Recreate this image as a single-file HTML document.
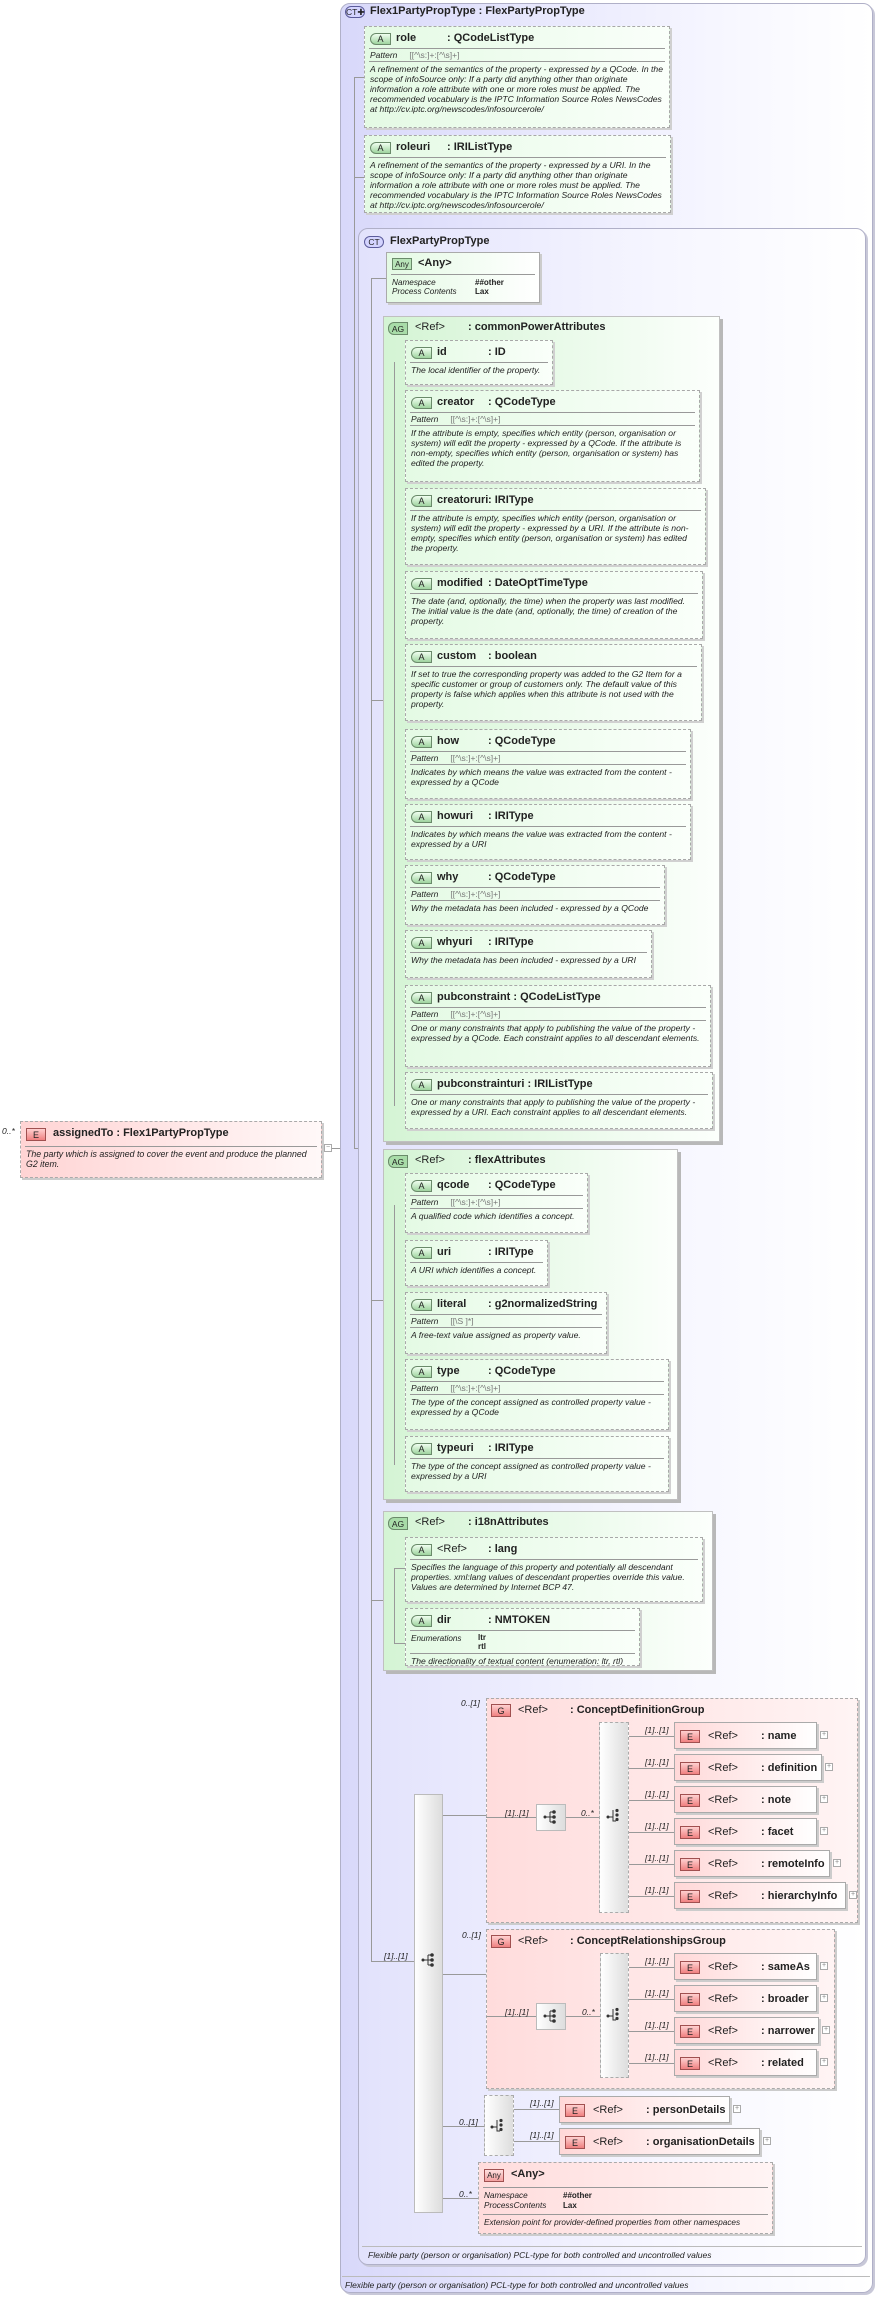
<!DOCTYPE html>
<html><head><meta charset="utf-8">
<style>
*{box-sizing:border-box;margin:0;padding:0}
body{width:879px;height:2298px;background:#fff;position:relative;overflow:hidden;font-family:"Liberation Sans",sans-serif;color:#222}
.abs{position:absolute}
.ct{position:absolute;border:1px solid #b0b0c8;border-radius:10px;box-shadow:2px 2px 0 #c8c8d8}
.a{position:absolute;border:1px dashed #a8a8a8;background:linear-gradient(90deg,#e4fae4,#fafffa);box-shadow:2px 2px 0 #d0d0d0;overflow:hidden}
.ag{position:absolute;border:1px solid #c0c0c0;background:linear-gradient(90deg,#d4f4d4,#fcfffc);box-shadow:3px 3px 0 #b8b8b8}
.h{height:21px;position:relative;font-size:11px;font-weight:bold;white-space:nowrap}
.h .n{position:absolute;left:31px;top:5px}
.h .t{position:absolute;left:82px;top:5px}
.bA{position:absolute;left:5px;top:6px;width:21px;height:12px;border:1px solid #6a8a6a;border-radius:6px 0 0 6px;background:linear-gradient(#f0fff0,#9fd49f);font-size:9px;font-weight:normal;text-align:center;line-height:10px}
.sep{border-top:1px solid #999;margin:0 4px}
.p{font-size:8.5px;font-style:italic;padding:1px 5px;height:12px;line-height:10px}
.p span{font-style:normal;color:#777;margin-left:12px}
.d{font-size:8.6px;font-style:italic;line-height:10px;padding:2px 5px}
.e{position:absolute;border:1px solid #aaa;background:linear-gradient(90deg,#ffd8d8,#fff);box-shadow:2px 2px 0 #ccc;height:27px;font-size:11px;font-weight:bold;white-space:nowrap}
.bE{position:absolute;left:5px;top:7px;width:20px;height:13px;border:1px solid #a05050;background:linear-gradient(#ffd0d0,#f08080);font-size:9px;font-weight:normal;text-align:center;line-height:12px}
.e .r{position:absolute;left:33px;top:7px;font-weight:normal}
.e .t{position:absolute;left:86px;top:7px}
.plus{position:absolute;width:8px;height:8px;border:1px solid #aaa;background:#fff;font-size:7px;line-height:6px;text-align:center;color:#888}
.m{position:absolute;font-size:8.5px;font-style:italic;white-space:nowrap}
.hl{position:absolute;height:1px;background:#999}
.vl{position:absolute;width:1px;background:#999}
.g{position:absolute;border:1px dashed #aaa;background:linear-gradient(90deg,#ffdcdc,#fff4f4);box-shadow:2px 2px 0 #ccc}
.bG{position:absolute;left:5px;top:6px;width:20px;height:13px;border:1px solid #a05050;background:linear-gradient(#ffd0d0,#f08080);font-size:9px;text-align:center;line-height:12px}
.bar{position:absolute;border:1px solid #bbb;background:linear-gradient(90deg,#fff,#ddd)}
.bard{position:absolute;border:1px dashed #aaa;background:linear-gradient(90deg,#fff,#ddd)}
.ref{position:absolute;font-size:11px;color:#222}
.tit{position:absolute;font-size:11px;font-weight:bold;white-space:nowrap}
</style></head><body>

<div class="ct" style="left:340px;top:3px;width:533px;height:2290px;background:linear-gradient(90deg,#d8d8fa,#f6f6ff 70%,#fff)"></div>
<div class="abs" style="left:345px;top:6px;width:20px;height:12px;border:1px solid #5a5a9a;border-radius:6px;background:#d4d4ff;font-size:8.5px;line-height:11px;text-align:center">CT✚</div>
<div class="tit" style="left:370px;top:5px">Flex1PartyPropType : FlexPartyPropType</div>
<div class="hl" style="left:342px;top:2276px;width:528px;background:#bbb"></div>
<div class="m" style="left:345px;top:2280px">Flexible party (person or organisation) PCL-type for both controlled and uncontrolled values</div>

<div class="vl" style="left:354px;top:77px;height:1071px"></div>
<div class="hl" style="left:354px;top:77px;width:10px"></div>
<div class="hl" style="left:354px;top:177px;width:10px"></div>
<div class="hl" style="left:354px;top:1148px;width:4px"></div>

<div class="a" style="left:364px;top:26px;width:306px;height:102px">
<div class="h"><div class="bA">A</div><span class="n">role</span><span class="t">: QCodeListType</span></div>
<div class="sep"></div><div class="p">Pattern<span>[[^\s:]+:[^\s]+]</span></div><div class="sep"></div>
<div class="d">A refinement of the semantics of the property - expressed by a QCode. In the scope of infoSource only: If a party did anything other than originate information a role attribute with one or more roles must be applied. The recommended vocabulary is the IPTC Information Source Roles NewsCodes at http://cv.iptc.org/newscodes/infosourcerole/</div>
</div>
<div class="a" style="left:364px;top:135px;width:307px;height:78px">
<div class="h"><div class="bA">A</div><span class="n">roleuri</span><span class="t">: IRIListType</span></div>
<div class="sep"></div>
<div class="d">A refinement of the semantics of the property - expressed by a URI. In the scope of infoSource only: If a party did anything other than originate information a role attribute with one or more roles must be applied. The recommended vocabulary is the IPTC Information Source Roles NewsCodes at http://cv.iptc.org/newscodes/infosourcerole/</div>
</div>

<div class="ct" style="left:358px;top:228px;width:508px;height:2037px;background:linear-gradient(90deg,#e2e2fc,#f6f6ff 60%,#fff)"></div>
<div class="abs" style="left:364px;top:236px;width:20px;height:12px;border:1px solid #5a5a9a;border-radius:6px;background:#d4d4ff;font-size:8.5px;line-height:11px;text-align:center">CT</div>
<div class="tit" style="left:390px;top:235px">FlexPartyPropType</div>
<div class="hl" style="left:362px;top:2246px;width:500px;background:#bbb"></div>
<div class="m" style="left:368px;top:2250px">Flexible party (person or organisation) PCL-type for both controlled and uncontrolled values</div>

<div class="vl" style="left:371px;top:278px;height:1683px"></div>
<div class="hl" style="left:371px;top:278px;width:15px"></div>
<div class="hl" style="left:371px;top:700px;width:12px"></div>
<div class="hl" style="left:371px;top:1300px;width:12px"></div>
<div class="hl" style="left:371px;top:1600px;width:12px"></div>
<div class="hl" style="left:371px;top:1961px;width:43px"></div>
<div class="m" style="left:384px;top:1951px">[1]..[1]</div>

<div class="abs" style="left:386px;top:252px;width:154px;height:51px;border:1px solid #aaa;background:linear-gradient(90deg,#e4fae4,#fff);box-shadow:2px 2px 0 #ccc">
<div class="abs" style="left:5px;top:5px;width:20px;height:12px;border:1px solid #6a8a6a;background:#b8e4b8;font-size:8px;text-align:center;line-height:11px">Any</div>
<div class="tit" style="left:31px;top:4px">&lt;Any&gt;</div>
<div class="abs" style="left:4px;top:21px;width:144px;border-top:1px solid #999"></div>
<div class="abs" style="left:5px;top:25px;font-size:8.2px;font-style:italic;line-height:9px">Namespace<br>Process Contents</div>
<div class="abs" style="left:88px;top:25px;font-size:8px;font-weight:bold;line-height:9px">##other<br>Lax</div>
</div>

<div class="ag" style="left:383px;top:316px;width:337px;height:826px"></div>
<div class="abs" style="left:388px;top:322px;width:20px;height:13px;border:1px solid #6a8a6a;border-radius:6px 0 0 6px;background:#a8dca8;font-size:8.5px;text-align:center;line-height:12px">AG</div>
<div class="ref" style="left:415px;top:321px">&lt;Ref&gt;</div>
<div class="tit" style="left:468px;top:321px">: commonPowerAttributes</div>
<div class="vl" style="left:394px;top:362px;height:744px"></div>

<div class="a" style="left:405px;top:340px;width:148px;height:45px"><div class="h"><div class="bA">A</div><span class="n">id</span><span class="t">: ID</span></div><div class="sep"></div><div class="d">The local identifier of the property.</div></div>

<div class="a" style="left:405px;top:390px;width:295px;height:92px"><div class="h"><div class="bA">A</div><span class="n">creator</span><span class="t">: QCodeType</span></div><div class="sep"></div><div class="p">Pattern<span>[[^\s:]+:[^\s]+]</span></div><div class="sep"></div><div class="d">If the attribute is empty, specifies which entity (person, organisation or system) will edit the property - expressed by a QCode. If the attribute is non-empty, specifies which entity (person, organisation or system) has edited the property.</div></div>

<div class="a" style="left:405px;top:488px;width:301px;height:77px"><div class="h"><div class="bA">A</div><span class="n">creatoruri</span><span class="t">: IRIType</span></div><div class="sep"></div><div class="d">If the attribute is empty, specifies which entity (person, organisation or system) will edit the property - expressed by a URI. If the attribute is non-empty, specifies which entity (person, organisation or system) has edited the property.</div></div>

<div class="a" style="left:405px;top:571px;width:298px;height:68px"><div class="h"><div class="bA">A</div><span class="n">modified</span><span class="t">: DateOptTimeType</span></div><div class="sep"></div><div class="d">The date (and, optionally, the time) when the property was last modified. The initial value is the date (and, optionally, the time) of creation of the property.</div></div>

<div class="a" style="left:405px;top:644px;width:297px;height:77px"><div class="h"><div class="bA">A</div><span class="n">custom</span><span class="t">: boolean</span></div><div class="sep"></div><div class="d">If set to true the corresponding property was added to the G2 Item for a specific customer or group of customers only. The default value of this property is false which applies when this attribute is not used with the property.</div></div>

<div class="a" style="left:405px;top:729px;width:286px;height:70px"><div class="h"><div class="bA">A</div><span class="n">how</span><span class="t">: QCodeType</span></div><div class="sep"></div><div class="p">Pattern<span>[[^\s:]+:[^\s]+]</span></div><div class="sep"></div><div class="d">Indicates by which means the value was extracted from the content - expressed by a QCode</div></div>

<div class="a" style="left:405px;top:804px;width:286px;height:56px"><div class="h"><div class="bA">A</div><span class="n">howuri</span><span class="t">: IRIType</span></div><div class="sep"></div><div class="d">Indicates by which means the value was extracted from the content - expressed by a URI</div></div>

<div class="a" style="left:405px;top:865px;width:260px;height:60px"><div class="h"><div class="bA">A</div><span class="n">why</span><span class="t">: QCodeType</span></div><div class="sep"></div><div class="p">Pattern<span>[[^\s:]+:[^\s]+]</span></div><div class="sep"></div><div class="d">Why the metadata has been included - expressed by a QCode</div></div>

<div class="a" style="left:405px;top:930px;width:247px;height:48px"><div class="h"><div class="bA">A</div><span class="n">whyuri</span><span class="t">: IRIType</span></div><div class="sep"></div><div class="d">Why the metadata has been included - expressed by a URI</div></div>

<div class="a" style="left:405px;top:985px;width:306px;height:82px"><div class="h"><div class="bA">A</div><span class="n">pubconstraint : QCodeListType</span></div><div class="sep"></div><div class="p">Pattern<span>[[^\s:]+:[^\s]+]</span></div><div class="sep"></div><div class="d">One or many constraints that apply to publishing the value of the property - expressed by a QCode. Each constraint applies to all descendant elements.</div></div>

<div class="a" style="left:405px;top:1072px;width:308px;height:57px"><div class="h"><div class="bA">A</div><span class="n">pubconstrainturi : IRIListType</span></div><div class="sep"></div><div class="d">One or many constraints that apply to publishing the value of the property - expressed by a URI. Each constraint applies to all descendant elements.</div></div>

<div class="ag" style="left:383px;top:1149px;width:295px;height:351px"></div>
<div class="abs" style="left:388px;top:1155px;width:20px;height:13px;border:1px solid #6a8a6a;border-radius:6px 0 0 6px;background:#a8dca8;font-size:8.5px;text-align:center;line-height:12px">AG</div>
<div class="ref" style="left:415px;top:1154px">&lt;Ref&gt;</div>
<div class="tit" style="left:468px;top:1154px">: flexAttributes</div>
<div class="vl" style="left:394px;top:1205px;height:260px"></div>

<div class="a" style="left:405px;top:1173px;width:183px;height:60px"><div class="h"><div class="bA">A</div><span class="n">qcode</span><span class="t">: QCodeType</span></div><div class="sep"></div><div class="p">Pattern<span>[[^\s:]+:[^\s]+]</span></div><div class="sep"></div><div class="d">A qualified code which identifies a concept.</div></div>
<div class="a" style="left:405px;top:1240px;width:143px;height:46px"><div class="h"><div class="bA">A</div><span class="n">uri</span><span class="t">: IRIType</span></div><div class="sep"></div><div class="d">A URI which identifies a concept.</div></div>
<div class="a" style="left:405px;top:1292px;width:202px;height:62px"><div class="h"><div class="bA">A</div><span class="n">literal</span><span class="t">: g2normalizedString</span></div><div class="sep"></div><div class="p">Pattern<span>[[\S ]*]</span></div><div class="sep"></div><div class="d">A free-text value assigned as property value.</div></div>
<div class="a" style="left:405px;top:1359px;width:264px;height:71px"><div class="h"><div class="bA">A</div><span class="n">type</span><span class="t">: QCodeType</span></div><div class="sep"></div><div class="p">Pattern<span>[[^\s:]+:[^\s]+]</span></div><div class="sep"></div><div class="d">The type of the concept assigned as controlled property value - expressed by a QCode</div></div>
<div class="a" style="left:405px;top:1436px;width:264px;height:56px"><div class="h"><div class="bA">A</div><span class="n">typeuri</span><span class="t">: IRIType</span></div><div class="sep"></div><div class="d">The type of the concept assigned as controlled property value - expressed by a URI</div></div>

<div class="ag" style="left:383px;top:1511px;width:330px;height:160px"></div>
<div class="abs" style="left:388px;top:1517px;width:20px;height:13px;border:1px solid #6a8a6a;border-radius:6px 0 0 6px;background:#a8dca8;font-size:8.5px;text-align:center;line-height:12px">AG</div>
<div class="ref" style="left:415px;top:1516px">&lt;Ref&gt;</div>
<div class="tit" style="left:468px;top:1516px">: i18nAttributes</div>
<div class="vl" style="left:394px;top:1568px;height:75px"></div>
<div class="hl" style="left:394px;top:1568px;width:11px"></div>
<div class="hl" style="left:394px;top:1643px;width:11px"></div>

<div class="a" style="left:405px;top:1537px;width:298px;height:65px"><div class="h"><div class="bA">A</div><span class="n" style="font-weight:normal">&lt;Ref&gt;</span><span class="t">: lang</span></div><div class="sep"></div><div class="d">Specifies the language of this property and potentially all descendant properties. xml:lang values of descendant properties override this value. Values are determined by Internet BCP 47.</div></div>
<div class="a" style="left:405px;top:1608px;width:235px;height:58px"><div class="h"><div class="bA">A</div><span class="n">dir</span><span class="t">: NMTOKEN</span></div><div class="sep"></div>
<div style="position:relative;height:22px"><span class="abs" style="left:5px;top:3px;font-size:8.2px;font-style:italic">Enumerations</span><span class="abs" style="left:72px;top:2px;font-size:8px;font-weight:bold;line-height:9px">ltr<br>rtl</span></div>
<div class="sep"></div><div class="d" style="white-space:nowrap">The directionality of textual content (enumeration: ltr, rtl)</div></div>

<div class="bar" style="left:414px;top:1794px;width:29px;height:419px"></div>
<svg class="abs" style="left:421px;top:1952px" width="16" height="16"><circle cx="2" cy="8" r="1.5" fill="#333"/><path d="M2 8H7M7 3V13M7 3H10M7 8H10M7 13H10" stroke="#333" fill="none"/><circle cx="11" cy="3" r="1.8" fill="#333"/><circle cx="11" cy="8" r="1.8" fill="#333"/><circle cx="11" cy="13" r="1.8" fill="#333"/></svg>
<div class="hl" style="left:443px;top:1815px;width:43px"></div>
<div class="hl" style="left:443px;top:1974px;width:43px"></div>
<div class="hl" style="left:443px;top:2126px;width:41px"></div>
<div class="hl" style="left:443px;top:2198px;width:35px"></div>

<div class="m" style="left:461px;top:1698px">0..[1]</div>
<div class="g" style="left:486px;top:1698px;width:372px;height:225px"></div>
<div class="bG" style="left:491px;top:1704px">G</div>
<div class="ref" style="left:518px;top:1704px">&lt;Ref&gt;</div>
<div class="tit" style="left:570px;top:1704px">: ConceptDefinitionGroup</div>
<div class="hl" style="left:486px;top:1817px;width:50px"></div>
<div class="m" style="left:505px;top:1808px">[1]..[1]</div>
<div class="bar" style="left:536px;top:1804px;width:30px;height:27px"></div>
<svg class="abs" style="left:543px;top:1809px" width="16" height="16"><circle cx="2" cy="8" r="1.5" fill="#333"/><path d="M2 8H7M7 3V13M7 3H10M7 8H10M7 13H10" stroke="#333" fill="none"/><circle cx="11" cy="3" r="1.8" fill="#333"/><circle cx="11" cy="8" r="1.8" fill="#333"/><circle cx="11" cy="13" r="1.8" fill="#333"/></svg>
<div class="hl" style="left:566px;top:1817px;width:33px"></div>
<div class="m" style="left:581px;top:1808px">0..*</div>
<div class="bard" style="left:599px;top:1722px;width:30px;height:191px"></div>
<svg class="abs" style="left:606px;top:1808px" width="16" height="18"><circle cx="2" cy="9" r="1.5" fill="#333"/><path d="M2 9H7M7 2V13H10" stroke="#333" fill="none"/><circle cx="11" cy="2.5" r="1.6" fill="#333"/><circle cx="11" cy="7" r="1.6" fill="#333"/><circle cx="11" cy="11.5" r="1.6" fill="#333"/></svg>

<div class="hl" style="left:629px;top:1736px;width:45px"></div><div class="m" style="left:645px;top:1725px">[1]..[1]</div>
<div class="e" style="left:674px;top:1722px;width:143px"><div class="bE">E</div><span class="r">&lt;Ref&gt;</span><span class="t">: name</span></div><div class="plus" style="left:820px;top:1731px">+</div>
<div class="hl" style="left:629px;top:1768px;width:45px"></div><div class="m" style="left:645px;top:1757px">[1]..[1]</div>
<div class="e" style="left:674px;top:1754px;width:148px"><div class="bE">E</div><span class="r">&lt;Ref&gt;</span><span class="t">: definition</span></div><div class="plus" style="left:825px;top:1763px">+</div>
<div class="hl" style="left:629px;top:1800px;width:45px"></div><div class="m" style="left:645px;top:1789px">[1]..[1]</div>
<div class="e" style="left:674px;top:1786px;width:143px"><div class="bE">E</div><span class="r">&lt;Ref&gt;</span><span class="t">: note</span></div><div class="plus" style="left:820px;top:1795px">+</div>
<div class="hl" style="left:629px;top:1832px;width:45px"></div><div class="m" style="left:645px;top:1821px">[1]..[1]</div>
<div class="e" style="left:674px;top:1818px;width:143px"><div class="bE">E</div><span class="r">&lt;Ref&gt;</span><span class="t">: facet</span></div><div class="plus" style="left:820px;top:1827px">+</div>
<div class="hl" style="left:629px;top:1864px;width:45px"></div><div class="m" style="left:645px;top:1853px">[1]..[1]</div>
<div class="e" style="left:674px;top:1850px;width:156px"><div class="bE">E</div><span class="r">&lt;Ref&gt;</span><span class="t">: remoteInfo</span></div><div class="plus" style="left:833px;top:1859px">+</div>
<div class="hl" style="left:629px;top:1896px;width:45px"></div><div class="m" style="left:645px;top:1885px">[1]..[1]</div>
<div class="e" style="left:674px;top:1882px;width:172px"><div class="bE">E</div><span class="r">&lt;Ref&gt;</span><span class="t">: hierarchyInfo</span></div><div class="plus" style="left:849px;top:1891px">+</div>

<div class="m" style="left:462px;top:1930px">0..[1]</div>
<div class="g" style="left:486px;top:1929px;width:349px;height:160px"></div>
<div class="bG" style="left:491px;top:1935px">G</div>
<div class="ref" style="left:518px;top:1935px">&lt;Ref&gt;</div>
<div class="tit" style="left:570px;top:1935px">: ConceptRelationshipsGroup</div>
<div class="hl" style="left:486px;top:2016px;width:50px"></div>
<div class="m" style="left:505px;top:2007px">[1]..[1]</div>
<div class="bar" style="left:536px;top:2003px;width:30px;height:27px"></div>
<svg class="abs" style="left:543px;top:2008px" width="16" height="16"><circle cx="2" cy="8" r="1.5" fill="#333"/><path d="M2 8H7M7 3V13M7 3H10M7 8H10M7 13H10" stroke="#333" fill="none"/><circle cx="11" cy="3" r="1.8" fill="#333"/><circle cx="11" cy="8" r="1.8" fill="#333"/><circle cx="11" cy="13" r="1.8" fill="#333"/></svg>
<div class="hl" style="left:566px;top:2016px;width:34px"></div>
<div class="m" style="left:582px;top:2007px">0..*</div>
<div class="bard" style="left:600px;top:1953px;width:29px;height:125px"></div>
<svg class="abs" style="left:606px;top:2007px" width="16" height="18"><circle cx="2" cy="9" r="1.5" fill="#333"/><path d="M2 9H7M7 2V13H10" stroke="#333" fill="none"/><circle cx="11" cy="2.5" r="1.6" fill="#333"/><circle cx="11" cy="7" r="1.6" fill="#333"/><circle cx="11" cy="11.5" r="1.6" fill="#333"/></svg>

<div class="hl" style="left:629px;top:1967px;width:45px"></div><div class="m" style="left:645px;top:1956px">[1]..[1]</div>
<div class="e" style="left:674px;top:1953px;width:143px"><div class="bE">E</div><span class="r">&lt;Ref&gt;</span><span class="t">: sameAs</span></div><div class="plus" style="left:820px;top:1962px">+</div>
<div class="hl" style="left:629px;top:1999px;width:45px"></div><div class="m" style="left:645px;top:1988px">[1]..[1]</div>
<div class="e" style="left:674px;top:1985px;width:143px"><div class="bE">E</div><span class="r">&lt;Ref&gt;</span><span class="t">: broader</span></div><div class="plus" style="left:820px;top:1994px">+</div>
<div class="hl" style="left:629px;top:2031px;width:45px"></div><div class="m" style="left:645px;top:2020px">[1]..[1]</div>
<div class="e" style="left:674px;top:2017px;width:145px"><div class="bE">E</div><span class="r">&lt;Ref&gt;</span><span class="t">: narrower</span></div><div class="plus" style="left:822px;top:2026px">+</div>
<div class="hl" style="left:629px;top:2063px;width:45px"></div><div class="m" style="left:645px;top:2052px">[1]..[1]</div>
<div class="e" style="left:674px;top:2049px;width:143px"><div class="bE">E</div><span class="r">&lt;Ref&gt;</span><span class="t">: related</span></div><div class="plus" style="left:820px;top:2058px">+</div>

<div class="m" style="left:459px;top:2117px">0..[1]</div>
<div class="bard" style="left:484px;top:2095px;width:30px;height:61px"></div>
<svg class="abs" style="left:490px;top:2118px" width="16" height="18"><circle cx="2" cy="9" r="1.5" fill="#333"/><path d="M2 9H7M7 2V13H10" stroke="#333" fill="none"/><circle cx="11" cy="2.5" r="1.6" fill="#333"/><circle cx="11" cy="7" r="1.6" fill="#333"/><circle cx="11" cy="11.5" r="1.6" fill="#333"/></svg>
<div class="hl" style="left:514px;top:2109px;width:45px"></div><div class="m" style="left:530px;top:2098px">[1]..[1]</div>
<div class="e" style="left:559px;top:2096px;width:171px"><div class="bE">E</div><span class="r">&lt;Ref&gt;</span><span class="t">: personDetails</span></div><div class="plus" style="left:733px;top:2105px">+</div>
<div class="hl" style="left:514px;top:2141px;width:45px"></div><div class="m" style="left:530px;top:2130px">[1]..[1]</div>
<div class="e" style="left:559px;top:2128px;width:201px"><div class="bE">E</div><span class="r">&lt;Ref&gt;</span><span class="t">: organisationDetails</span></div><div class="plus" style="left:763px;top:2137px">+</div>

<div class="m" style="left:459px;top:2189px">0..*</div>
<div class="g" style="left:478px;top:2162px;width:295px;height:72px">
<div class="abs" style="left:5px;top:6px;width:20px;height:13px;border:1px solid #a05050;background:linear-gradient(#ffe0e0,#f4a0a0);font-size:8px;text-align:center;line-height:12px">Any</div>
<div class="tit" style="left:32px;top:5px">&lt;Any&gt;</div>
<div class="abs" style="left:4px;top:24px;width:285px;border-top:1px solid #999"></div>
<div class="abs" style="left:5px;top:28px;font-size:8.2px;font-style:italic;line-height:10px">Namespace<br>ProcessContents</div>
<div class="abs" style="left:84px;top:28px;font-size:8px;font-weight:bold;line-height:10px">##other<br>Lax</div>
<div class="abs" style="left:4px;top:51px;width:285px;border-top:1px solid #999"></div>
<div class="abs" style="left:5px;top:55px;font-size:8.2px;font-style:italic;white-space:nowrap">Extension point for provider-defined properties from other namespaces</div>
</div>

<div class="m" style="left:2px;top:1126px">0..*</div>
<div class="abs" style="left:20px;top:1121px;width:302px;height:57px;border:1px dashed #aaa;background:linear-gradient(90deg,#ffd4d4,#fff8f8);box-shadow:2px 2px 0 #ccc">
<div class="bE" style="left:5px;top:6px">E</div>
<div class="tit" style="left:32px;top:5px">assignedTo : Flex1PartyPropType</div>
<div class="abs" style="left:4px;top:24px;width:292px;border-top:1px solid #999"></div>
<div class="abs" style="left:5px;top:27px;width:290px;font-size:8.8px;font-style:italic;line-height:10px">The party which is assigned to cover the event and produce the planned G2 item.</div>
</div>
<div class="plus" style="left:324px;top:1144px;width:8px">−</div>
<div class="hl" style="left:332px;top:1148px;width:8px"></div>
</body></html>
